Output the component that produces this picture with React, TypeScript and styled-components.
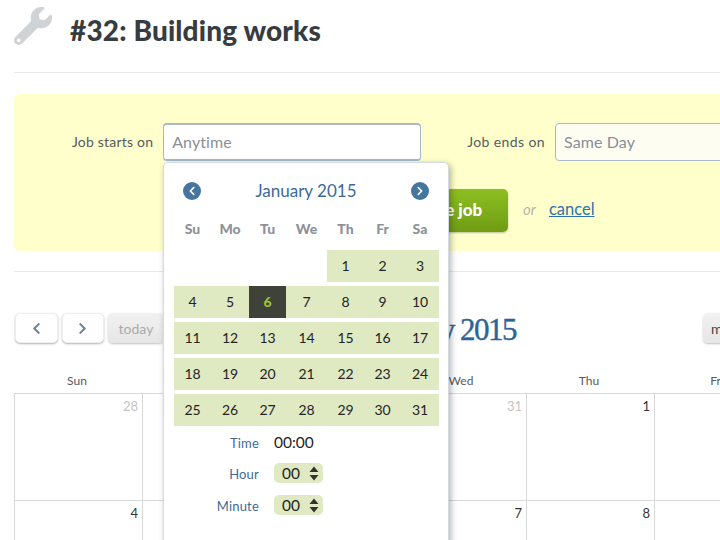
import React from "react";
import styled, { createGlobalStyle } from "styled-components";
import { FaWrench, FaChevronLeft, FaChevronRight } from "react-icons/fa";

const GlobalStyle = createGlobalStyle`
  html, body {
    margin: 0;
    padding: 0;
    width: 720px;
    height: 540px;
    overflow: hidden;
    background: #fff;
    font-family: Lato, "Liberation Sans", sans-serif;
    color: #3a3f44;
  }
  * { box-sizing: border-box; }
`;

const weekdays = ["Su", "Mo", "Tu", "We", "Th", "Fr", "Sa"];
const bigDays = [
  { name: "Sun", first: 28, dim: true },
  { name: "Mon", first: 29, dim: true },
  { name: "Tue", first: 30, dim: true },
  { name: "Wed", first: 31, dim: true },
  { name: "Thu", first: 1, dim: false },
  { name: "Fri", first: 2, dim: false },
  { name: "Sat", first: 3, dim: false },
];

const weeks = [
  [null, null, null, null, 1, 2, 3],
  [4, 5, 6, 7, 8, 9, 10],
  [11, 12, 13, 14, 15, 16, 17],
  [18, 19, 20, 21, 22, 23, 24],
  [25, 26, 27, 28, 29, 30, 31],
];

const Arrows = () => (
  <svg width="10" height="15" viewBox="0 0 10 15">
    <path d="M5 0.5 L9.5 6 H0.5 Z M5 14.5 L9.5 9 H0.5 Z" fill="#333" />
  </svg>
);

const App = () => {
  return (
    <Page>
      <GlobalStyle />
      <Header>
        <HeaderIcon size={38} color="#d0d3d5" />
        <Title>#32: Building works</Title>
      </Header>
      <Panel>
        <FieldRow>
          <Field>
            <FieldLabel>Job starts on</FieldLabel>
            <DateInput placeholder="Anytime" $focused />
            <Popover>
              <MonthBar>
                <RoundButton>
                  <FaChevronLeft size={10} />
                </RoundButton>
                <MonthName>January 2015</MonthName>
                <RoundButton>
                  <FaChevronRight size={10} />
                </RoundButton>
              </MonthBar>
              <DayGrid>
                {weekdays.map((d) => (
                  <Weekday key={d}>{d}</Weekday>
                ))}
              </DayGrid>
              <Weeks>
                {weeks.map((week, i) => (
                  <DayGrid key={i}>
                    {week.map((d, j) =>
                      d === null ? (
                        <EmptyDay key={j} />
                      ) : (
                        <Day key={j} $active={d === 6}>
                          {d}
                        </Day>
                      )
                    )}
                  </DayGrid>
                ))}
              </Weeks>
              <TimeList>
                <TimeRow $short>
                  <TimeLabel>Time</TimeLabel>
                  <TimeValue>00:00</TimeValue>
                </TimeRow>
                <TimeRow>
                  <TimeLabel>Hour</TimeLabel>
                  <FakeSelect>
                    00
                    <Arrows />
                  </FakeSelect>
                </TimeRow>
                <TimeRow>
                  <TimeLabel>Minute</TimeLabel>
                  <FakeSelect>
                    00
                    <Arrows />
                  </FakeSelect>
                </TimeRow>
              </TimeList>
            </Popover>
          </Field>
          <Field>
            <FieldLabel $spacing="0.4px">Job ends on</FieldLabel>
            <DateInput placeholder="Same Day" />
          </Field>
        </FieldRow>
        <Actions>
          <SaveButton>Save job</SaveButton>
          <OrText>or</OrText>
          <CancelLink href="#">cancel</CancelLink>
        </Actions>
      </Panel>
      <Divider />
      <Toolbar>
        <ButtonGroup>
          <NavButton>
            <FaChevronLeft size={13} />
          </NavButton>
          <NavButton>
            <FaChevronRight size={13} />
          </NavButton>
          <GreyButton>today</GreyButton>
        </ButtonGroup>
        <CalendarTitle>January 2015</CalendarTitle>
        <GreyButton $dark>month</GreyButton>
      </Toolbar>
      <BigHead>
        {bigDays.map((d) => (
          <BigHeadCell key={d.name}>{d.name}</BigHeadCell>
        ))}
      </BigHead>
      <BigGrid>
        {bigDays.map((d) => (
          <BigCell key={d.name} $dim={d.dim}>
            {d.first}
          </BigCell>
        ))}
        {bigDays.map((d, i) => (
          <BigCell key={d.name} $dim={false}>
            {4 + i}
          </BigCell>
        ))}
      </BigGrid>
    </Page>
  );
};

const Page = styled.div`
  width: 896px;
  height: 540px;
  margin-left: 14px;
  overflow: hidden;
`;

const Header = styled.header`
  display: flex;
  align-items: center;
  gap: 18px;
  height: 73px;
  padding-bottom: 12px;
  border-bottom: 1px solid #e6e8ea;
`;

const HeaderIcon = styled(FaWrench)`
  margin-bottom: 8px;
`;

const Title = styled.h1`
  margin: 0;
  font-size: 28px;
  font-weight: 900;
  letter-spacing: 0.15px;
  color: #373c41;
`;

const Panel = styled.section`
  margin-top: 21px;
  height: 157px;
  padding: 29px 0 0 58px;
  background: #ffffcc;
  border-radius: 6px 0 0 6px;
`;

const FieldRow = styled.div`
  display: flex;
  gap: 46px;
`;

const Field = styled.div`
  position: relative;
  display: flex;
  align-items: center;
  gap: 10px;
`;

const FieldLabel = styled.label<{ $spacing?: string }>`
  padding-bottom: 1px;
  font-size: 14px;
  color: #555b60;
  letter-spacing: ${(p) => p.$spacing || "0.2px"};
  white-space: nowrap;
`;

const DateInput = styled.input<{ $focused?: boolean }>`
  width: 258px;
  height: 38px;
  padding: 0 8px 2px;
  font: 400 16px Lato, sans-serif;
  letter-spacing: 0.1px;
  background: ${(p) => (p.$focused ? "#fff" : "#fdfdf2")};
  border: 1px solid #a9b9c9;
  border-width: ${(p) => (p.$focused ? "2px 1px" : "1px")};
  border-radius: 4px;
  outline: none;
  &::placeholder {
    color: #8b8f98;
    opacity: 1;
  }
`;

const Popover = styled.div`
  position: absolute;
  z-index: 5;
  left: 91px;
  top: 39px;
  width: 286px;
  height: 420px;
  padding: 19px 10px 0;
  background: #fff;
  border: 1px solid #d3dae0;
  border-radius: 5px;
  box-shadow: 2px 2px 6px rgba(0, 0, 0, 0.3);
`;

const MonthBar = styled.div`
  display: flex;
  align-items: center;
  justify-content: space-between;
  padding: 0 9px;
  height: 18px;
  margin-bottom: 19px;
`;

const RoundButton = styled.span`
  display: flex;
  align-items: center;
  justify-content: center;
  width: 18px;
  height: 18px;
  border-radius: 50%;
  background: #45769f;
  color: #fff;
`;

const MonthName = styled.div`
  padding-bottom: 2px;
  font-size: 17px;
  color: #3b6a99;
`;

const DayGrid = styled.div`
  display: grid;
  grid-template-columns: 37px 38px 37px 41px 37px 37px 38px;
`;

const Weekday = styled.div`
  height: 31px;
  padding-top: 1px;
  text-align: center;
  font-size: 14px;
  font-weight: 900;
  color: #8d9298;
`;

const Weeks = styled.div`
  display: flex;
  flex-direction: column;
  gap: 4px;
`;

const EmptyDay = styled.div`
  height: 32px;
`;

const Day = styled.div<{ $active?: boolean }>`
  height: 32px;
  line-height: 32px;
  text-align: center;
  font-size: 14px;
  font-weight: ${(p) => (p.$active ? 900 : 400)};
  color: ${(p) => (p.$active ? "#9cc232" : "#1f2326")};
  background: ${(p) => (p.$active ? "#3f4238" : "#e0eac2")};
`;

const TimeList = styled.div`
  margin-top: 1px;
`;

const TimeRow = styled.div<{ $short?: boolean }>`
  display: flex;
  align-items: center;
  gap: 15px;
  height: ${(p) => (p.$short ? "30px" : "32px")};
`;

const TimeLabel = styled.div`
  width: 85px;
  padding-top: 2px;
  text-align: right;
  font-size: 13px;
  letter-spacing: 0.2px;
  color: #3f6a99;
`;

const TimeValue = styled.div`
  font-size: 15.5px;
  color: #1f2326;
`;

const FakeSelect = styled.div`
  display: flex;
  align-items: center;
  justify-content: space-between;
  width: 49px;
  height: 20px;
  padding: 0 4px 0 8px;
  font-size: 15.5px;
  color: #1f2326;
  background: #e0eac2;
  border-radius: 5px;
`;

const Actions = styled.div`
  display: flex;
  align-items: center;
  margin-top: 28px;
  padding-left: 321px;
`;

const SaveButton = styled.button`
  width: 115px;
  height: 43px;
  margin-right: 15px;
  padding: 0 0 3px;
  font: 900 17px Lato, sans-serif;
  color: #fff;
  background: linear-gradient(#8dbf20, #6f9c14);
  border: 0;
  border-radius: 5px;
  box-shadow: 0 1px 2px rgba(0, 0, 0, 0.25);
`;

const OrText = styled.span`
  padding-bottom: 3px;
  font-size: 15px;
  font-style: italic;
  color: #b5b5a8;
  margin-right: 13px;
`;

const CancelLink = styled.a`
  margin-bottom: 3px;
  font-size: 16.5px;
  color: #2d70ad;
`;

const Divider = styled.hr`
  margin: 20px 0 0;
  border: 0;
  border-top: 1px solid #e6e8ea;
`;

const Toolbar = styled.div`
  display: flex;
  align-items: center;
  height: 30px;
  margin-top: 41px;
  padding-left: 1px;
`;

const ButtonGroup = styled.div`
  display: flex;
  gap: 4px;
`;

const NavButton = styled.button`
  display: flex;
  align-items: center;
  justify-content: center;
  width: 42.5px;
  height: 30px;
  padding: 0;
  color: #6f8296;
  background: #fff;
  border: 1px solid #eceeef;
  border-radius: 5px;
  box-shadow: 0 1px 2px rgba(0, 0, 0, 0.3);
`;

const GreyButton = styled.button<{ $dark?: boolean }>`
  flex: none;
  width: 56px;
  height: 30px;
  padding: 0;
  font: 400 14px Lato, sans-serif;
  color: ${(p) => (p.$dark ? "#444" : "#a9abad")};
  background: linear-gradient(#f1f1f1, #e6e6e6);
  border: 0;
  border-radius: 5px;
  box-shadow: 0 1px 2px rgba(0, 0, 0, 0.25);
`;

const CalendarTitle = styled.h2`
  flex: none;
  width: 539px;
  margin: 0;
  padding: 4px 187px 0 0;
  text-align: right;
  font: 400 31px "Liberation Serif", serif;
  letter-spacing: -1.5px;
  -webkit-text-stroke: 0.4px #2d6496;
  color: #2d6496;
`;

const BigHead = styled.div`
  display: grid;
  grid-template-columns: repeat(7, 128px);
  margin-top: 30px;
  height: 20px;
`;

const BigHeadCell = styled.div`
  padding-right: 2px;
  text-align: center;
  font-size: 12px;
  color: #555b60;
`;

const BigGrid = styled.div`
  display: grid;
  grid-template-columns: repeat(7, 128px);
  grid-auto-rows: 107px;
  border-top: 1px solid #d8d8d8;
  border-left: 1px solid #d8d8d8;
`;

const BigCell = styled.div<{ $dim: boolean }>`
  padding: 4px 4px;
  text-align: right;
  font-size: 13px;
  color: ${(p) => (p.$dim ? "#c4c4c4" : "#333")};
  border-right: 1px solid #d8d8d8;
  border-bottom: 1px solid #d8d8d8;
`;

export default App;
